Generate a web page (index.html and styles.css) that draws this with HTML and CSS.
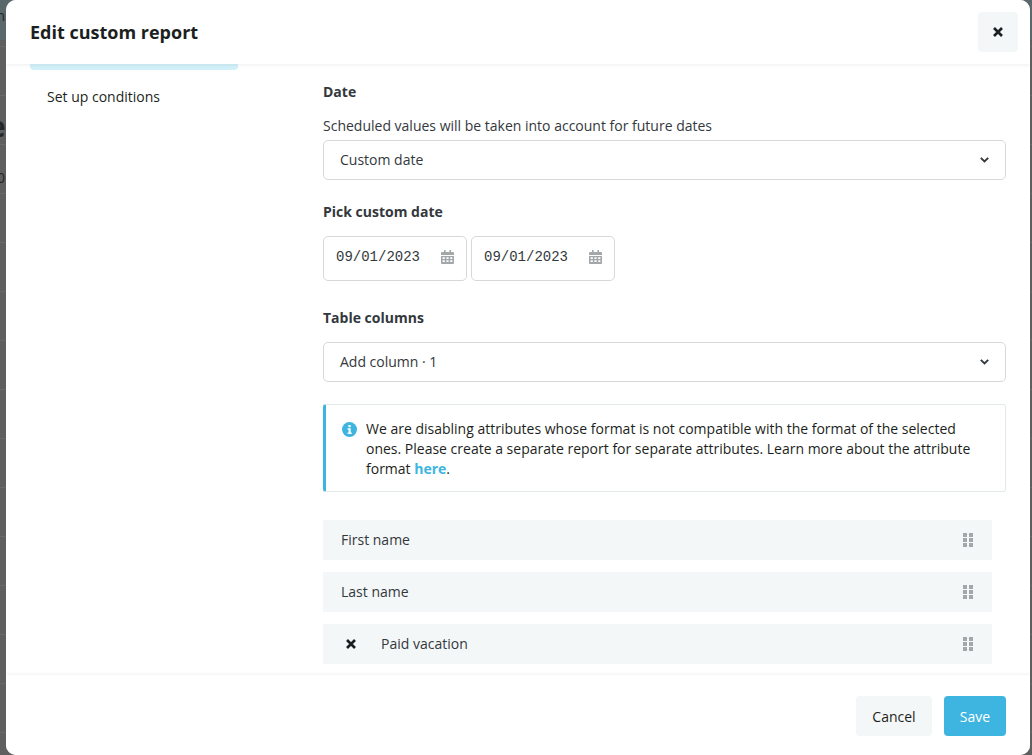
FILE: index.html
```html
<!DOCTYPE html>
<html lang="en">

<head>
  <meta charset="UTF-8" />
  <meta name="viewport" content="width=device-width, initial-scale=1.0" />
  <title>Edit custom report</title>
  <link rel="stylesheet" href="styles.css">
</head>

<body>
  <!-- Page behind the dialog, only a sliver shows -->
  <div class="backdrop">
    <div class="backdrop-top"></div>
    <span class="ghost ghost-n">n</span>
    <span class="ghost ghost-e">e</span>
    <span class="ghost ghost-zero">0</span>
  </div>

  <div class="modal">
    <header class="modal-header">
      <h2>Edit custom report</h2>
      <button class="close-btn" aria-label="Close">
        <svg width="12" height="12" viewBox="0 0 12 12"><path d="M2 2l8 8M10 2l-8 8" stroke="#1c1f21" stroke-width="2.6" fill="none" /></svg>
      </button>
    </header>

    <div class="modal-body">
      <nav class="steps">
        <div class="step step-active"></div>
        <div class="step">Set up conditions</div>
      </nav>

      <div class="form">
        <label class="field-label">Date</label>
        <p class="hint">Scheduled values will be taken into account for future dates</p>
        <div class="select">
          <span>Custom date</span>
          <svg width="9" height="6" viewBox="0 0 9 6"><path d="M.8.8l3.7 3.7L8.2.8" stroke="#33383c" stroke-width="1.9" fill="none" /></svg>
        </div>

        <label class="field-label label-date">Pick custom date</label>
        <div class="date-row">
          <div class="date-input">
            <span>09/01/2023</span>
            <svg width="13" height="14" viewBox="0 0 13 14"><path fill="#a3a7aa" d="M3 0h1.6v2H8.4V0H10v2h2a1 1 0 0 1 1 1v2H0V3a1 1 0 0 1 1-1h2zM0 6h13v7a1 1 0 0 1-1 1H1a1 1 0 0 1-1-1zm1.6 1.3v1.6h2.2V7.3zm3.8 0v1.6h2.2V7.3zm3.8 0v1.6h2.2V7.3zm-7.6 3v1.6h2.2v-1.6zm3.8 0v1.6h2.2v-1.6zm3.8 0v1.6h2.2v-1.6z" /></svg>
          </div>
          <div class="date-input">
            <span>09/01/2023</span>
            <svg width="13" height="14" viewBox="0 0 13 14"><path fill="#a3a7aa" d="M3 0h1.6v2H8.4V0H10v2h2a1 1 0 0 1 1 1v2H0V3a1 1 0 0 1 1-1h2zM0 6h13v7a1 1 0 0 1-1 1H1a1 1 0 0 1-1-1zm1.6 1.3v1.6h2.2V7.3zm3.8 0v1.6h2.2V7.3zm3.8 0v1.6h2.2V7.3zm-7.6 3v1.6h2.2v-1.6zm3.8 0v1.6h2.2v-1.6zm3.8 0v1.6h2.2v-1.6z" /></svg>
          </div>
        </div>

        <label class="field-label label-columns">Table columns</label>
        <div class="select">
          <span>Add column · 1</span>
          <svg width="9" height="6" viewBox="0 0 9 6"><path d="M.8.8l3.7 3.7L8.2.8" stroke="#33383c" stroke-width="1.9" fill="none" /></svg>
        </div>

        <div class="notice">
          <svg class="notice-icon" width="15" height="15" viewBox="0 0 15 15">
            <circle cx="7.5" cy="7.5" r="7.5" fill="#3db5e0" />
            <rect x="6.4" y="3" width="2.3" height="2.2" fill="#fff" />
            <path d="M5.6 6.3h3.1v4.3h1v1.4H5.6v-1.4h1V7.7h-1z" fill="#fff" />
          </svg>
          <p>We are disabling attributes whose format is not compatible with the format of the selected ones. Please create a separate report for separate attributes. Learn more about the attribute format <a href="#">here</a>.</p>
        </div>

        <div class="col-list">
          <div class="col-row">
            <span>First name</span>
            <svg class="grip" width="10" height="14" viewBox="0 0 10 14"><path fill="#a3a7aa" d="M0 0h4v4H0zM6 0h4v4H6zM0 5h4v4H0zM6 5h4v4H6zM0 10h4v4H0zM6 10h4v4H6z" /></svg>
          </div>
          <div class="col-row">
            <span>Last name</span>
            <svg class="grip" width="10" height="14" viewBox="0 0 10 14"><path fill="#a3a7aa" d="M0 0h4v4H0zM6 0h4v4H6zM0 5h4v4H0zM6 5h4v4H6zM0 10h4v4H0zM6 10h4v4H6z" /></svg>
          </div>
          <div class="col-row">
            <svg class="remove" width="12" height="12" viewBox="0 0 12 12"><path d="M2 2l8 8M10 2l-8 8" stroke="#1c1f21" stroke-width="2.6" fill="none" /></svg>
            <span>Paid vacation</span>
            <svg class="grip" width="10" height="14" viewBox="0 0 10 14"><path fill="#a3a7aa" d="M0 0h4v4H0zM6 0h4v4H6zM0 5h4v4H0zM6 5h4v4H6zM0 10h4v4H0zM6 10h4v4H6z" /></svg>
          </div>
        </div>
      </div>
    </div>

    <footer class="modal-footer">
      <button class="btn btn-cancel">Cancel</button>
      <button class="btn btn-save">Save</button>
    </footer>
  </div>
</body>

</html>
```

FILE: styles.css
```css
/* General body styles */
html,
body {
  height: 100%;
}

body {
  margin: 0;
  height: 755px;
  overflow: hidden;
  font-family: 'Open Sans', sans-serif;
  font-size: 14px;
  line-height: 20px;
  color: #33383c;
  background-color: #5f5f5f;
}

/* Page behind the dialog */
.backdrop {
  position: absolute;
  inset: 0;
  overflow: hidden;
  background-image: repeating-linear-gradient(to bottom, transparent 0, transparent 48px, #6a6a6a 48px, #6a6a6a 49px);
  background-position: 0 -2px;
}

.backdrop-top {
  height: 40px;
  background-color: #59686b;
}

.ghost {
  position: absolute;
  left: -4px;
  color: #262626;
}

.ghost-n {
  top: 5px;
  font-size: 15px;
}

.ghost-e {
  top: 108px;
  left: -11px;
  font-size: 28px;
  line-height: 36px;
  font-weight: 700;
}

.ghost-zero {
  top: 168px;
  left: -3px;
  font-size: 14px;
}

/* Dialog */
.modal {
  position: relative;
  display: flex;
  flex-direction: column;
  box-sizing: border-box;
  width: 1024px;
  height: 755px;
  margin-left: 6px;
  background-color: #fff;
  border-radius: 10px;
  overflow: hidden;
}

.modal-header {
  position: relative;
  z-index: 1;
  flex: none;
  display: flex;
  align-items: center;
  justify-content: space-between;
  height: 64px;
  padding: 0 12px 0 24px;
  background-color: #fff;
  box-shadow: 0 1px 4px rgba(0, 0, 0, 0.07);
}

.modal-header h2 {
  margin: 0;
  font-size: 18px;
  line-height: 24px;
  font-weight: 700;
  color: #1c1f21;
}

.close-btn {
  display: flex;
  align-items: center;
  justify-content: center;
  width: 40px;
  height: 40px;
  padding: 0;
  border: 0;
  border-radius: 4px;
  background-color: #f4f7f8;
}

/* Body: sidebar and form, scrolled part way down */
.modal-body {
  flex: 1;
  display: flex;
  min-height: 0;
  padding: 0 24px;
  overflow: hidden;
}

.steps {
  flex: none;
  width: 208px;
  margin-right: 85px;
}

.step {
  height: 40px;
  padding: 0 17px;
  margin-top: 7px;
  line-height: 40px;
  color: #1c1f21;
}

.step-active {
  height: 6px;
  margin-top: 0;
  background-color: #d1f0fa;
  border-radius: 0 0 4px 4px;
}

.form {
  flex: 1;
  min-width: 0;
  padding-top: 18px;
}

.field-label {
  display: block;
  font-weight: 700;
}

.hint {
  margin: 14px 0 4px;
}

.select {
  display: flex;
  align-items: center;
  justify-content: space-between;
  box-sizing: border-box;
  height: 40px;
  padding: 0 16px;
  border: 1px solid #d6d9db;
  border-radius: 5px;
}

.label-date {
  margin-top: 22px;
}

.date-row {
  display: flex;
  gap: 4px;
  margin-top: 14px;
}

.date-input {
  display: flex;
  align-items: center;
  justify-content: space-between;
  box-sizing: border-box;
  width: 144px;
  height: 45px;
  padding: 0 12px 4px;
  border: 1px solid #d6d9db;
  border-radius: 5px;
  font-family: 'Liberation Mono', monospace;
}

.label-columns {
  margin-top: 27px;
}

.label-columns + .select {
  margin-top: 14px;
}

/* Info box */
.notice {
  display: flex;
  gap: 9px;
  box-sizing: border-box;
  height: 88px;
  margin-top: 22px;
  padding: 14px 16px 0 16px;
  border: 1px solid #e3e8ea;
  border-left: 3px solid #3db5e0;
  border-radius: 3px;
  color: #1c1f21;
}

.notice-icon {
  flex: none;
  margin-top: 3px;
}

.notice p {
  margin: 0;
}

.notice a {
  color: #3db5e0;
  font-weight: 700;
  text-decoration: none;
}

/* Selected columns */
.col-list {
  display: flex;
  flex-direction: column;
  gap: 12px;
  margin: 28px 14px 0 0;
}

.col-row {
  display: flex;
  align-items: center;
  flex: none;
  height: 40px;
  padding: 0 19px 0 18px;
  background-color: #f4f7f8;
}

.col-row .grip {
  margin-left: auto;
}

.col-row .remove {
  margin: 0 24px 0 4px;
}

.modal-footer {
  position: relative;
  flex: none;
  display: flex;
  justify-content: flex-end;
  gap: 12px;
  box-sizing: border-box;
  height: 80px;
  padding: 21px 24px 0 0;
  background-color: #fff;
  box-shadow: 0 -1px 3px rgba(0, 0, 0, 0.06);
}

.btn {
  height: 40px;
  border: 0;
  border-radius: 4px;
  font-family: inherit;
  font-size: 14px;
}

.btn-cancel {
  width: 76px;
  background-color: #f4f7f8;
  color: #1c1f21;
}

.btn-save {
  width: 62px;
  background-color: #3db5e0;
  color: #fff;
}
```
